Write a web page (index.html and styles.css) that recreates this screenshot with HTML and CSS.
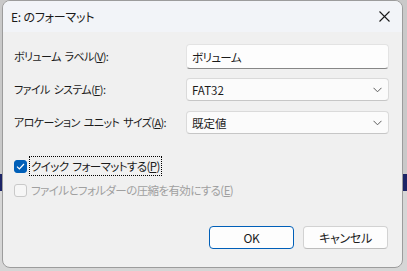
FILE: index.html
```html
<!DOCTYPE html>
<html lang="ja">
<head>
    <meta charset="UTF-8">
    <title>E: のフォーマット</title>
    <link rel="stylesheet" href="styles.css">
</head>
<body>

    <div class="dialog">
        <!-- タイトルバー -->
        <div class="titlebar">
            <span class="title">E: のフォーマット</span>
            <svg class="close" width="11" height="11" viewBox="0 0 11 11">
                <path d="M0.5 0.5 L10.5 10.5 M10.5 0.5 L0.5 10.5" stroke="#1a1a1a" stroke-width="1.1" fill="none"/>
            </svg>
        </div>

        <div class="content">
            <div class="fields">
                <div class="row row-first">
                    <label>ボリューム ラベル(<u>V</u>):</label>
                    <div class="textbox">ボリューム</div>
                </div>
                <div class="row">
                    <label>ファイル システム(<u>F</u>):</label>
                    <div class="combo">
                        <span>FAT32</span>
                        <svg width="9" height="6" viewBox="0 0 9 6"><path d="M0.5 0.8 L4.5 4.8 L8.5 0.8" stroke="#5c5c5c" stroke-width="1" fill="none"/></svg>
                    </div>
                </div>
                <div class="row">
                    <label>アロケーション ユニット サイズ(<u>A</u>):</label>
                    <div class="combo">
                        <span>既定値</span>
                        <svg width="9" height="6" viewBox="0 0 9 6"><path d="M0.5 0.8 L4.5 4.8 L8.5 0.8" stroke="#5c5c5c" stroke-width="1" fill="none"/></svg>
                    </div>
                </div>
            </div>

            <div class="checks">
                <div class="check">
                    <span class="box checked">
                        <svg width="9" height="7" viewBox="0 0 9 7"><path d="M1 3.6 L3.4 6 L8 1" stroke="#ffffff" stroke-width="1.2" fill="none"/></svg>
                    </span>
                    <span class="check-label focus">クイック フォーマットする(<u>P</u>)</span>
                </div>
                <div class="check disabled">
                    <span class="box"></span>
                    <span class="check-label">ファイルとフォルダーの圧縮を有効にする(<u>E</u>)</span>
                </div>
            </div>

            <div class="buttons">
                <button class="btn default">OK</button>
                <button class="btn">キャンセル</button>
            </div>
        </div>
    </div>

</body>
</html>
```

FILE: styles.css
```css
* {
    margin: 0;
    padding: 0;
    box-sizing: border-box;
}

body {
    width: 407px;
    height: 271px;
    overflow: hidden;
    font-family: "Noto Sans CJK JP", "Noto Sans", sans-serif;
    font-size: 11.5px;
    font-feature-settings: "palt";
    letter-spacing: -0.6px;
    word-spacing: 2px;
    color: #1b1b1b;
    /* 後ろのウィンドウ */
    background: linear-gradient(#c9c9c9 0, #c9c9c9 174px, #1c2466 174px, #1c2466 191px, #d6d6d6 191px);
}

.dialog {
    margin-left: 2px;
    width: 401px;
    height: 268px;
    border: 1px solid #9c9c9c;
    border-radius: 8px;
    overflow: hidden;
    background-color: #f0f0f0;
    display: flex;
    flex-direction: column;
}

.titlebar {
    height: 31px;
    flex-shrink: 0;
    background-color: #f2f4f8;
    display: flex;
    align-items: center;
    justify-content: space-between;
    padding: 0 12px 0 8px;
}

.title {
    font-size: 12px;
    letter-spacing: -0.2px;
    word-spacing: 0;
    line-height: 1;
}

.close {
    display: block;
}

.content {
    flex: 1;
    padding: 12px 13px 0 11px;
}

.fields {
    display: flex;
    flex-direction: column;
}

.row {
    display: flex;
    align-items: center;
    margin-top: 9px;
}

.row-first {
    margin-top: 0;
}

.row + .row + .row {
    margin-top: 10px;
}

label {
    flex: 1;
    font-size: 11px;
    line-height: 1;
    white-space: nowrap;
}

.textbox {
    flex-shrink: 0;
    width: 203px;
    height: 25px;
    background-color: #fdfdfd;
    border: 1px solid #e3e3e3;
    border-bottom: 1px solid #878787;
    border-radius: 4px;
    padding: 0 5px;
    display: flex;
    align-items: center;
}

.combo {
    flex-shrink: 0;
    width: 203px;
    height: 23px;
    background-color: #fbfbfb;
    border: 1px solid #dadada;
    border-bottom-color: #c6c6c6;
    border-radius: 4px;
    padding: 0 6px 0 5px;
    display: flex;
    align-items: center;
    justify-content: space-between;
}

.combo span {
    letter-spacing: 0;
}

.combo svg {
    display: block;
}

.checks {
    margin-top: 22px;
    display: flex;
    flex-direction: column;
    gap: 4px;
}

.check {
    display: flex;
    align-items: center;
    height: 20px;
}

.box {
    width: 13px;
    height: 13px;
    border-radius: 3px;
    border: 1px solid #c9c9c9;
    background-color: #f6f6f6;
    display: flex;
    align-items: center;
    justify-content: center;
    margin-right: 2px;
}

.box.checked {
    background-color: #005fb8;
    border-color: #005fb8;
}

.check-label {
    line-height: 18px;
    padding: 0 1px;
    border: 1px solid transparent;
}

.check-label.focus {
    border: 1px dotted #000000;
}

.check.disabled {
    color: #a0a0a0;
}

.buttons {
    display: flex;
    justify-content: flex-end;
    gap: 9px;
    margin-top: 26px;
    padding-right: 1px;
}

.btn {
    width: 85px;
    height: 23px;
    font-family: inherit;
    font-size: 12px;
    font-feature-settings: "palt";
    letter-spacing: -0.3px;
    color: #1b1b1b;
    background-color: #fdfdfd;
    border: 1px solid #d2d2d2;
    border-bottom-color: #bdbdbd;
    border-radius: 4px;
}

.btn.default {
    border: 1px solid #005fb8;
}
```
